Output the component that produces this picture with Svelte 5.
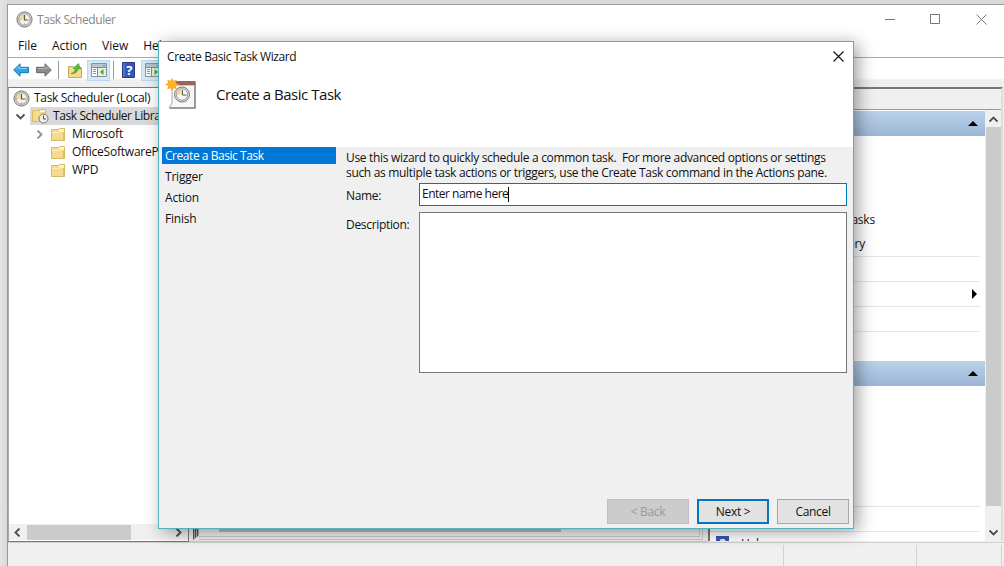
<script lang="ts">
  let name = $state('Enter name here')
  let step = $state(0)

  const menus = ['File', 'Action', 'View', 'Help']
  const steps = ['Create a Basic Task', 'Trigger', 'Action', 'Finish']
  const folders = [
    { label: 'Microsoft', expandable: true },
    { label: 'OfficeSoftwareProtectionPlatform', expandable: false },
    { label: 'WPD', expandable: false }
  ]
</script>

{#snippet clock(size: number)}
  <svg class="icon" width={size} height={size} viewBox="0 0 17 17">
    <circle cx="8.5" cy="8.5" r="7.6" fill="#d5d5d8" stroke="#77777c" />
    <circle cx="8.5" cy="8.5" r="5.7" fill="#f5f2e5" stroke="#98989c" />
    <path d="M8.5 8.5V3.3A5.2 5.2 0 0 0 3.3 8.5z" fill="#f5dc91" />
    <path d="M8.5 4v5h4" fill="none" stroke="#555b66" stroke-width="1.2" />
    <path d="M8.5 12.5v1M3.5 8.5h1" stroke="#888" />
  </svg>
{/snippet}

{#snippet folder()}
  <svg class="icon" width="14" height="13" viewBox="0 0 14 13">
    <path d="M.5 1.5h8v-1h5v12H.5z" fill="#f5dc8c" stroke="#d9b866" />
    <path d="M8 1h5v2H8z" fill="#fff5c8" />
    <path d="M1 4.5h7l1.5-1H13" fill="none" stroke="#fff0b5" />
    <path d="M12.5 4v8" stroke="#e8bf5d" />
  </svg>
{/snippet}

{#snippet chevron(d: string)}
  <svg class="icon" width="9" height="9" viewBox="0 0 9 9">
    <path {d} fill="none" stroke="#4b4b4b" stroke-width="1.8" />
  </svg>
{/snippet}

{#snippet panes(green: string)}
  <svg class="icon" width="16" height="14" viewBox="0 0 16 14">
    <path d="M.5.5h15v13H.5z" fill="#fff" stroke="#8a939c" />
    <path d="M1 1h14v3H1z" fill="#b9c4cf" />
    <path d="M1 4.5h14M6.5 5v8M12 2.5h2" stroke="#7f8993" />
    <path d="M2 6.5h3M2 8.5h3M2 10.5h3" stroke="#7d91a5" />
    <path d="M7 5h8v8H7z" fill="#e3f2dc" />
    <path d={green} fill="#46a43a" />
  </svg>
{/snippet}

<div class="screen">
  <div class="window">
    <header class="titlebar">
      {@render clock(17)}
      <span class="title">Task Scheduler</span>
      <svg class="caption" width="97" height="11" viewBox="0 0 97 11" fill="none" stroke="#777">
        <path d="M0 5.5h10M45.5.5h9v9h-9zM91.5.5l10 10M101.5.5l-10 10" transform="translate(-5 0)" />
      </svg>
    </header>

    <nav class="menubar">
      {#each menus as menu}
        <span>{menu}</span>
      {/each}
    </nav>

    <div class="toolbar">
      <svg class="icon" width="16" height="14" viewBox="0 0 16 14">
        <path d="M.7 7L7 .8v3.5h8.4v5.4H7v3.5z" fill="#32a4e8" stroke="#1674b5" />
        <path d="M3 6.4L6 3.4v2h8" fill="none" stroke="#86d3fb" />
      </svg>
      <svg class="icon forward" width="16" height="14" viewBox="0 0 16 14">
        <path d="M15.3 7L9 .8v3.5H.6v5.4H9v3.5z" fill="#8c8c8c" stroke="#666" />
        <path d="M2 5.5h8v-2l3 3" fill="none" stroke="#b5b5b5" />
      </svg>
      <i class="sep"></i>
      <svg class="icon up" width="15" height="15" viewBox="0 0 15 15">
        <path d="M.5 3.5h5l1 1h7v10H.5z" fill="#f3d98c" stroke="#c9a95c" />
        <path d="M3 10.500c3-.5 4-2.500 4.500-5L5 5.500 10.500.5l2 5.500-2-.5c-1 3.500-3.500 5.500-7.500 5z" fill="#55bd3e" stroke="#38972b" stroke-width=".6" />
      </svg>
      <div class="toggle">{@render panes('M12.500 6v6l-3.500-3z')}</div>
      <i class="sep second"></i>
      <svg class="icon help" width="13" height="16" viewBox="0 0 13 16">
        <path d="M.5.5h12v15H.5z" fill="#3458b8" stroke="#233c89" />
        <path d="M2 1v14" stroke="#7590d8" />
        <text x="7.300" y="12.500" text-anchor="middle" fill="#fff" font-size="13" font-weight="bold">?</text>
      </svg>
      <div class="toggle last">{@render panes('M9.500 6v6l3.500-3z')}</div>
    </div>

    <main class="content">
      <section class="tree">
        <div class="row root">{@render clock(17)}<span>Task Scheduler (Local)</span></div>
        <div class="row library">
          <span class="expander">{@render chevron('M.5 2.500l4 4 4-4')}</span>
          <div class="selected">
            <svg class="icon" width="17" height="16" viewBox="0 0 17 16">
              <path d="M.5 2.500h7v-1h6v12H.5z" fill="#f5dc8c" stroke="#d9b866" />
              <path d="M8 2h5v2H8z" fill="#fff5c8" />
              <circle cx="11.500" cy="10.500" r="4.500" fill="#f1efe8" stroke="#777" />
              <path d="M11.500 7.500v3.500h2.500" fill="none" stroke="#555" />
            </svg>
            <span>Task Scheduler Library</span>
          </div>
        </div>
        {#each folders as item}
          <div class="row child">
            <span class="expander dim">
              {#if item.expandable}{@render chevron('M2.500 .5l4 4-4 4')}{/if}
            </span>
            {@render folder()}
            <span class="name">{item.label}</span>
          </div>
        {/each}
        <div class="hscroll">
          {@render chevron('M6.500 .5l-4 4 4 4')}
          <i class="thumb"></i>
          {@render chevron('M2.500 .5l4 4-4 4')}
        </div>
      </section>

      <section class="middle">
        <i class="grip"></i>
        <div class="track"><i></i></div>
      </section>

      <section class="actions">
        <div class="heading"></div>
        <div class="actions-body">
          <div class="list">
            <div class="band"><i class="tri"></i></div>
            <div class="group first">
              <div class="action">Display All Running Tasks</div>
              <div class="action history">Enable All Tasks History</div>
              <div class="line"></div>
              <div class="line sub"><i></i></div>
              <div class="line"></div>
              <div class="line"></div>
            </div>
            <div class="band"><i class="tri"></i></div>
            <div class="group second">
              <div class="line"></div>
              <div class="help-row">
                <svg width="13" height="14" viewBox="0 0 13 14">
                  <path d="M0 0h13v14H0z" fill="#3555b0" />
                  <text x="6.500" y="11.500" text-anchor="middle" fill="#fff" font-size="12" font-weight="bold">?</text>
                </svg>
                <span>Help</span>
              </div>
            </div>
          </div>
          <div class="vscroll">
            {@render chevron('M.5 6.500l4-4 4 4')}
            <i></i>
            {@render chevron('M.5 2.500l4 4 4-4')}
          </div>
        </div>
      </section>
    </main>

    <footer class="statusbar"><i></i><i></i><i></i></footer>
  </div>

  <div class="dialog" role="dialog" aria-label="Create Basic Task Wizard">
    <div class="dialog-head">
      <div class="dialog-title">
        <span>Create Basic Task Wizard</span>
        <svg width="11" height="11" viewBox="0 0 11 11"><path d="M.5.5l10 10M10.500.5l-10 10" stroke="#111" stroke-width="1.100" /></svg>
      </div>
      <div class="banner">
        <svg width="32" height="32" viewBox="0 0 32 32">
          <path d="M7 4h23v26H4l3-5z" fill="#f7f7f8" stroke="#a9a7aa" />
          <path d="M5 30h25V5" fill="none" stroke="#8a8789" stroke-width="1.500" />
          <path d="M7 3h23.500v4H7z" fill="#98665a" />
          <path d="M8 7.500h21" stroke="#d8c3bb" />
          <circle cx="17" cy="16.500" r="7.500" fill="#ddd" stroke="#77777b" />
          <circle cx="17" cy="16.500" r="5.700" fill="#f7f5ec" stroke="#999" />
          <path d="M17 16.500v-5.200a5.200 5.200 0 0 0-5.200 5.200z" fill="#f5dc91" />
          <path d="M17.500 12v5h4" fill="none" stroke="#555b66" />
          <path d="M7 0l1.600 3 3.200-1.500-1 3.500 3.200 1.500-3.200 1.500 1 3.500L8.600 10 7 13l-1.600-3-3.200 1.500 1-3.500L0 6.500 3.200 5l-1-3.500L5.400 3z" fill="#f5a51f" />
          <circle cx="7" cy="6.500" r="4" fill="#fbb42b" />
        </svg>
        <h1>Create a Basic Task</h1>
      </div>
    </div>

    <div class="dialog-body">
      <ul class="steps">
        {#each steps as label, i}
          <li class:active={i === step}>{label}</li>
        {/each}
      </ul>
      <div class="form">
        <p>Use this wizard to quickly schedule a common task.&nbsp; For more advanced options or settings</p>
        <p>such as multiple task actions or triggers, use the Create Task command in the Actions pane.</p>
        <div class="field">
          <label for="name">Name:</label>
          <div class="input" id="name"><span>{name}</span><i></i></div>
        </div>
        <div class="field desc">
          <label for="description">Description:</label>
          <textarea id="description"></textarea>
        </div>
      </div>
    </div>

    <div class="buttons">
      <button class="back" disabled>&lt; Back</button>
      <button class="next" onclick={() => (step = Math.min(step + 1, 3))}>Next &gt;</button>
      <button class="cancel">Cancel</button>
    </div>
  </div>
</div>

<style>
  :global(body) { overflow: hidden; }
  * { box-sizing: border-box; }
  .screen {
    position: relative;
    width: 1004px;
    height: 566px;
    padding: 4px 0 0 7px;
    overflow: hidden;
    background: linear-gradient(90deg, #e4e4e4, #dadada 7px);
    font: 12px/16px "Open Sans", "Noto Sans", sans-serif;
    letter-spacing: -0.32px;
    color: #111;
    white-space: nowrap;
  }
  .icon { display: block; flex: none; }
  .window {
    display: flex;
    flex-direction: column;
    height: 562px;
    border-top: 1px solid #999;
    border-left: 1px solid #999;
    background: #fff;
  }
  .titlebar { display: flex; align-items: center; height: 31px; padding: 0 17px 2px 8px; flex: none; }
  .title { margin-left: 4px; color: #888; letter-spacing: -0.4px; }
  .caption { margin-left: auto; overflow: visible; }
  .menubar {
    display: flex;
    height: 22px;
    flex: none;
    padding: 2px 10px;
    gap: 15px;
    border-bottom: 1px solid #aaa;
    letter-spacing: -0.02px;
  }
  .toolbar { display: flex; align-items: center; height: 29px; flex: none; padding: 0 5px 5px; background: linear-gradient(#fff 20px, #efefef 22px); }
  .forward { margin-left: 7px; }
  .sep { width: 1px; height: 18px; margin-left: 6px; background: #999; }
  .up { margin-left: 9px; }
  .toggle { display: flex; align-items: center; justify-content: center; width: 23px; height: 21px; margin-left: 4px; background: #d5e8f7; border: 1px solid #b5d8f2; }
  .sep.second { margin-left: 3px; }
  .help { margin-left: 8px; }
  .toggle.last { margin-left: 6px; }
  .content { display: flex; height: 455px; flex: none; background: #efefef; }

  .tree {
    display: flex;
    flex-direction: column;
    width: 181px;
    height: 455px;
    padding-top: 1px;
    border: 1px solid #777;
    border-left-color: #aaa;
    background: #fff;
    overflow: hidden;
  }
  .row { display: flex; align-items: center; height: 18px; flex: none; }
  .root { padding-left: 4px; }
  .root span { margin-left: 4px; }
  .expander { width: 9px; margin-left: 7px; flex: none; }
  .dim { opacity: 0.6; }
  .selected { display: flex; align-items: center; width: 150px; height: 18px; margin-left: 5px; padding-left: 2px; background: #d9d9d9; }
  .selected span { margin-left: 4px; letter-spacing: -0.4px; }
  .child .expander { margin-left: 26px; }
  .child > :global(.icon) { margin-left: 7px; }
  .name { margin-left: 7px; letter-spacing: -0.22px; }
  .hscroll { display: flex; align-items: center; height: 16px; margin-top: auto; margin-bottom: 1px; padding: 0 5px 0 4px; background: #f0f0f0; }
  .hscroll .thumb { width: 104px; height: 15px; margin: 0 auto 0 5px; background: #cbcbcb; }

  .middle { display: flex; align-items: flex-end; width: 519px; padding: 0 5px 1px 4px; border-bottom: 1px solid #ccc; }
  .grip { width: 6px; height: 16px; background: repeating-linear-gradient(90deg, #555 0 1px, #aaa 1px 2px); clip-path: polygon(0 0, 100% 0, 100% 70%, 0 100%); }
  .track { flex: 1; height: 13px; padding-left: 20px; border-bottom: 4px double #ccc; border-right: 4px double #ccc; }
  .track i { display: block; width: 342px; height: 5px; background: #bbb; }

  .actions { flex: 1; height: 454px; border-top: 2px solid #777; border-left: 2px solid #777; border-right: 2px solid #ddd; background: #fff; margin-right: 1px; }
  .heading { height: 21px; background: #f0f0f0; border-bottom: 1px solid #999; }
  .actions-body { display: flex; height: 431px; overflow: hidden; }
  .list { width: 275px; padding-top: 1px; }
  .band { display: flex; align-items: center; justify-content: flex-end; height: 25px; padding-right: 7px; background: linear-gradient(#bad1e8, #9bb6d6); }
  .tri { border: 5px solid transparent; border-top: 0; border-bottom: 5px solid #000; }
  .group { padding-right: 5px; }
  .group.first { height: 225px; padding-top: 75px; }
  .action { padding-left: 15px; width: 165px; height: 24px; line-height: 18px; text-align: right; letter-spacing: -0.2px; }
  .action.history { width: 155px; height: 21px; }
  .line { height: 25px; border-top: 1px solid #e5e5e5; }
  .sub { display: flex; align-items: center; justify-content: flex-end; padding-right: 3px; }
  .sub i { border: 5px solid transparent; border-right: 0; border-left-color: #000; }
  .group.second { padding-top: 120px; }
  .help-row { display: flex; border-top: 1px solid #e5e5e5; padding: 4px 6px; height: 25px; }
  .help-row span { margin-left: 12px; }
  .vscroll { display: flex; flex-direction: column; align-items: center; width: 16px; margin-left: auto; padding: 5px 0 4px; background: #f0f0f0; }
  .vscroll i { width: 15px; height: 379px; margin: 3px 0 auto; background: #cbcbcb; }

  .statusbar { display: flex; flex: 1; background: #f0f0f0; border-top: 1px solid #d0d0d0; padding-top: 2px; }
  .statusbar i { width: 776px; border-right: 1px solid #d2d2d2; }
  .statusbar i:nth-child(2) { width: 133px; }
  .statusbar i:nth-child(3) { width: 85px; }

  /* The wizard floats over the console window */
  .dialog {
    position: absolute;
    left: 158px;
    top: 41px;
    width: 696px;
    height: 488px;
    display: flex;
    flex-direction: column;
    border: 1px solid #4fb3bb;
    background: #f0f0f0;
    box-shadow: 4px 3px 16px rgba(0, 0, 0, 0.38);
  }
  .dialog-head { height: 105px; background: #fff; }
  .dialog-title { display: flex; align-items: center; justify-content: space-between; height: 30px; padding: 0 9px 0 8px; letter-spacing: -0.41px; }
  .dialog-title svg { margin-bottom: 2px; }
  .banner { display: flex; align-items: center; padding: 6px 0 0 6px; }
  h1 { margin: 0 0 0 19px; font-size: 15px; line-height: 20px; font-weight: 400; letter-spacing: -0.47px; }
  .dialog-body { display: flex; flex: 1; }
  .steps { width: 174px; margin: 0 0 0 3px; padding: 0; list-style: none; }
  .steps li { height: 17px; margin-bottom: 4px; padding-left: 3px; line-height: 17px; letter-spacing: -0.2px; }
  .steps .active { background: #0078d7; color: #fff; letter-spacing: -0.45px; }
  .form { width: 501px; margin-left: 10px; padding-top: 3px; }
  p { margin: 0; line-height: 15px; }
  .field { display: flex; margin-top: 3px; }
  .field label { width: 73px; line-height: 25px; }
  .input { display: flex; align-items: center; width: 428px; height: 23px; padding: 0 2px 1px; border: 1px solid #0078b5; background: #fff; letter-spacing: -0.5px; }
  .input i { width: 1px; height: 15px; background: #000; }
  .desc { margin-top: 4px; }
  textarea { width: 428px; height: 161px; border: 1px solid #777; background: #fff; resize: none; }
  .buttons { display: flex; justify-content: flex-end; gap: 8px; padding: 0 4px 4px 0; }
  button {
    width: 72px;
    height: 25px;
    padding: 0;
    border: 1px solid #aaa5aa;
    background: #e2e2e2;
    font: inherit;
    letter-spacing: inherit;
    color: #111;
  }
  .back { width: 82px; background: #ccc; border-color: #bfbfbf; color: #999; }
  .next { border: 2px solid #0078c0; }
</style>
